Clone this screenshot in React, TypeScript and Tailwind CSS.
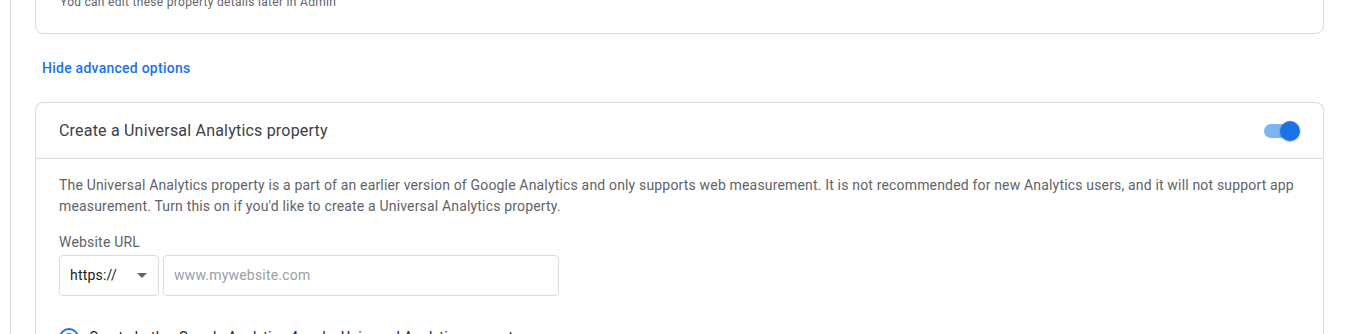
import React from "react";

export default function App() {
  return (
    <div className="h-[334px] w-[1347px] overflow-hidden bg-white" style={{ fontFamily: "Roboto, 'Liberation Sans', sans-serif" }}>
      <div className="ml-[10px] mr-[23px] min-h-[400px] border-l border-[#dadce0] pl-[24px]">
        {/* top card (cut off) */}
        <div className="-mt-[40px] h-[74px] rounded-b-lg rounded-t-lg border border-[#dadce0] pl-[24px] pt-[33px]">
          <div className="text-[12px] leading-4 tracking-[0.3px] text-[#5f6368]">
            You can edit these property details later in Admin
          </div>
        </div>

        <div className="mt-[24px] pl-[7px] text-[14px] font-medium leading-5 tracking-[0.25px] text-[#1a73e8]">
          Hide advanced options
        </div>

        {/* UA card */}
        <div className="mt-[24px] rounded-t-lg border border-b-0 border-[#dadce0]">
          <div className="flex h-[56px] items-center justify-between border-b border-[#dadce0] pl-[23px] pr-[23px]">
            <div className="text-[16px] leading-6 tracking-[0.2px] text-[#3c4043]">Create a Universal Analytics property</div>
            <div className="relative h-[20px] w-[36px]">
              <div className="absolute left-0 top-[3px] h-[14px] w-[34px] rounded-full bg-[#7cb5ef]" />
              <div className="absolute right-0 top-0 h-[20px] w-[20px] rounded-full bg-[#1a73e8] shadow-[0_1px_2px_rgba(0,0,0,0.3)]" />
            </div>
          </div>
          <div className="pl-[23px] pr-[20px] pt-[16px]">
            <p className="text-[14px] leading-[21px] tracking-[0.17px] text-[#5f6368]">
              The Universal Analytics property is a part of an earlier version of Google Analytics and only supports web measurement. It is not recommended for new Analytics users, and it will not support app measurement. Turn this on if you'd like to create a Universal Analytics property.
            </p>
            <div className="mt-[15px] text-[14px] leading-[20px] tracking-[0.2px] text-[#5f6368]">Website URL</div>
            <div className="mt-[3px] flex gap-[4px]">
              <div className="flex h-[41px] w-[100px] items-center justify-between rounded border border-[#dadce0] pl-[10px] pr-[11px]">
                <span className="text-[14px] tracking-[0.2px] text-[#202124]">https://</span>
                <svg width="10" height="5" viewBox="0 0 10 5"><path d="M0 0 L10 0 L5 5 Z" fill="#5f6368" /></svg>
              </div>
              <div className="flex h-[41px] w-[396px] items-center rounded border border-[#dadce0] pl-[10px]">
                <span className="text-[14px] tracking-[0.2px] text-[#9aa0a6]">www.mywebsite.com</span>
              </div>
            </div>
            <div className="mt-[31px] flex items-center gap-[10px]">
              <div className="flex h-[20px] w-[20px] items-center justify-center rounded-full border-2 border-[#1a73e8]">
                <div className="h-[10px] w-[10px] rounded-full bg-[#1a73e8]" />
              </div>
              <span className="text-[14px] tracking-[0.2px] text-[#202124]">Create both a Google Analytics 4 and a Universal Analytics property</span>
            </div>
          </div>
        </div>
      </div>
    </div>
  );
}
